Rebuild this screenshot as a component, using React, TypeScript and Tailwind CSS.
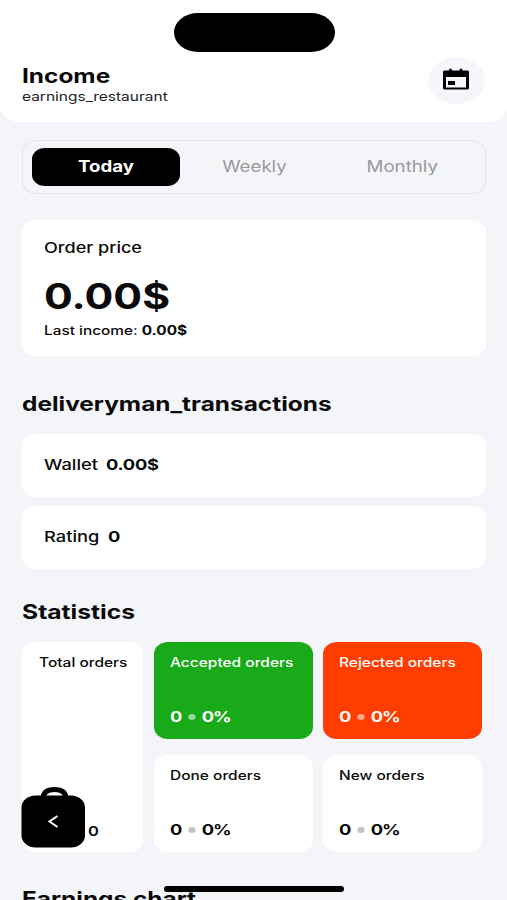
import type { ReactNode } from "react";
import clsx from "clsx";

const tabs = ["Today", "Weekly", "Monthly"];

const stats = [
    { label: "Accepted orders", card: "bg-[#18aa18] text-white", dot: "bg-white/55" },
    { label: "Rejected orders", card: "bg-[#ff3d00] text-white", dot: "bg-white/55" },
    { label: "Done orders", card: "bg-white", dot: "bg-[#c4c4c4]" },
    { label: "New orders", card: "bg-white", dot: "bg-[#c4c4c4]" },
];

// Wide lettering used across the whole screen
function Wide({ className, origin = "origin-left", children }: { className?: string; origin?: string; children: ReactNode }) {
    return <div className={clsx("w-max scale-x-[1.22] whitespace-nowrap", origin, className)}>{children}</div>;
}

function CalendarIcon() {
    return (
        <svg width="28" height="24" viewBox="0 0 28 24" fill="none">
            <path d="M7 2Q7 .5 8.500 .5T10 2v2H7zM17.500 2Q17.500 .5 19 .5T20.500 2v2h-3z" fill="#000" />
            <path d="M1 4Q1 2.500 2.500 2.500h23Q27 2.500 27 4v16q0 1.500-1.500 1.500h-23Q1 21.500 1 20zM4 9v10.500h20V9z" fill="#000" fillRule="evenodd" />
            <path d="M6 13h7v4H6z" fill="#000" />
        </svg>
    );
}

function Header() {
    return (
        <header className="relative flex h-[122px] items-start justify-between rounded-b-[20px_16px] bg-white px-[22px]">
            <div className="absolute left-[173.500px] top-[13px] h-[38.500px] w-[161px] rounded-[24px_/_19.500px] bg-black" />
            <div className="pt-[64px]">
                <Wide className="text-[20px] font-bold leading-6">Income</Wide>
                <Wide className="pt-px text-[12.700px] leading-4 text-[#222]">earnings_restaurant</Wide>
            </div>
            <button className="mt-[57px] flex h-[47px] w-[57px] items-center justify-center rounded-[50%] bg-[#f4f6f9] pb-[2px] pr-[2px]">
                <CalendarIcon />
            </button>
        </header>
    );
}

function StatCard({ label, card, dot }: { label: string; card: string; dot: string }) {
    return (
        <div className={clsx("flex h-[97px] flex-col justify-between rounded-[14px_/_12px] pb-[12px] pl-[16px] pt-[13px]", card)}>
            <Wide className="text-[12.700px] font-medium leading-4">{label}</Wide>
            <Wide className="flex items-center text-[15px] font-bold leading-5">
                0
                <span className={clsx("ml-[4.500px] mr-[5px] h-[6.500px] w-[6.500px] rounded-full", dot)} />
                <span className="tracking-[-1px]">0%</span>
            </Wide>
        </div>
    );
}

function BackBag() {
    return (
        <svg className="absolute -left-px top-[144px]" width="66" height="63" viewBox="0 0 66 63" fill="none">
            <path d="M22 13C22 6 27 3.500 33.500 3.500S45 6 45 13" stroke="#000" strokeWidth="5" />
            <rect x="0.500" y="9.500" width="63.500" height="52" rx="14" ry="12" fill="#000" />
            <path d="M36.500 30 28.500 35.500 36.500 41" stroke="#fff" strokeWidth="2" />
        </svg>
    );
}

export default function App() {
    return (
        <div className="relative h-[900px] w-full overflow-hidden bg-[#f3f5f9] font-['Inter',sans-serif] text-[#0a0a0a]">
            <Header />
            <main className="pl-[22px]">
                <div className="mt-[18px] grid h-[54px] w-[464px] grid-cols-3 rounded-[15px_/_12px] border-[1.500px] border-[#e3e5e8] px-[9px] py-[7px]">
                    {tabs.map((tab, i) => (
                        <button
                            key={tab}
                            className={clsx(
                                "flex items-center justify-center rounded-[13px_/_11px] text-[15.300px]",
                                i === 0 ? "bg-black font-bold text-white" : "text-[#999]"
                            )}
                        >
                            <Wide origin="origin-center">{tab}</Wide>
                        </button>
                    ))}
                </div>

                <section className="mt-[26px] h-[136px] w-[464px] rounded-[14px_/_12px] bg-white pl-[22px] pt-[18px]">
                    <Wide className="text-[14.800px] font-medium leading-5">Order price</Wide>
                    <Wide className="mt-[16px] text-[35px] font-bold leading-[44px]">0.00$</Wide>
                    <Wide className="mt-[5px] text-[12.600px] font-medium leading-4">
                        Last income: <span className="font-bold">0.00$</span>
                    </Wide>
                </section>

                <Wide className="mt-[35px] pt-px text-[20px] font-bold leading-6">deliveryman_transactions</Wide>
                <section className="mt-[18px] flex w-[464px] flex-col gap-[9px]">
                    <div className="flex h-[63px] items-center rounded-[14px_/_12px] bg-white pl-[22px]">
                        <Wide className="flex gap-[6.500px] text-[15px] font-medium">
                            Wallet <span className="font-bold tracking-[-0.2px]">0.00$</span>
                        </Wide>
                    </div>
                    <div className="flex h-[63px] items-center rounded-[14px_/_12px] bg-white pl-[22px]">
                        <Wide className="flex gap-[7px] text-[15px] font-medium">
                            Rating <span className="font-bold">0</span>
                        </Wide>
                    </div>
                </section>

                <Wide className="mt-[30px] pt-px text-[20.200px] font-bold leading-6">Statistics</Wide>
                <section className="mt-[18px] flex gap-[10.500px]">
                    <div className="relative flex h-[210px] w-[121px] flex-col justify-between rounded-[14px_/_12px] bg-white pb-[11px] pl-[17px] pt-[13px]">
                        <Wide className="text-[12.700px] font-medium leading-4">Total orders</Wide>
                        <Wide className="ml-[49px] text-[13.500px] font-semibold leading-5">0</Wide>
                        <BackBag />
                    </div>
                    <div className="grid grid-cols-[159px_159px] gap-x-[10.500px] gap-y-4">
                        {stats.map((stat) => (
                            <StatCard key={stat.label} {...stat} />
                        ))}
                    </div>
                </section>

                <Wide className="mt-[35px] text-[20px] font-bold leading-6">Earnings chart</Wide>
            </main>
            <div className="absolute left-[164px] top-[886px] h-[6px] w-[180px] rounded-full bg-black" />
        </div>
    );
}
